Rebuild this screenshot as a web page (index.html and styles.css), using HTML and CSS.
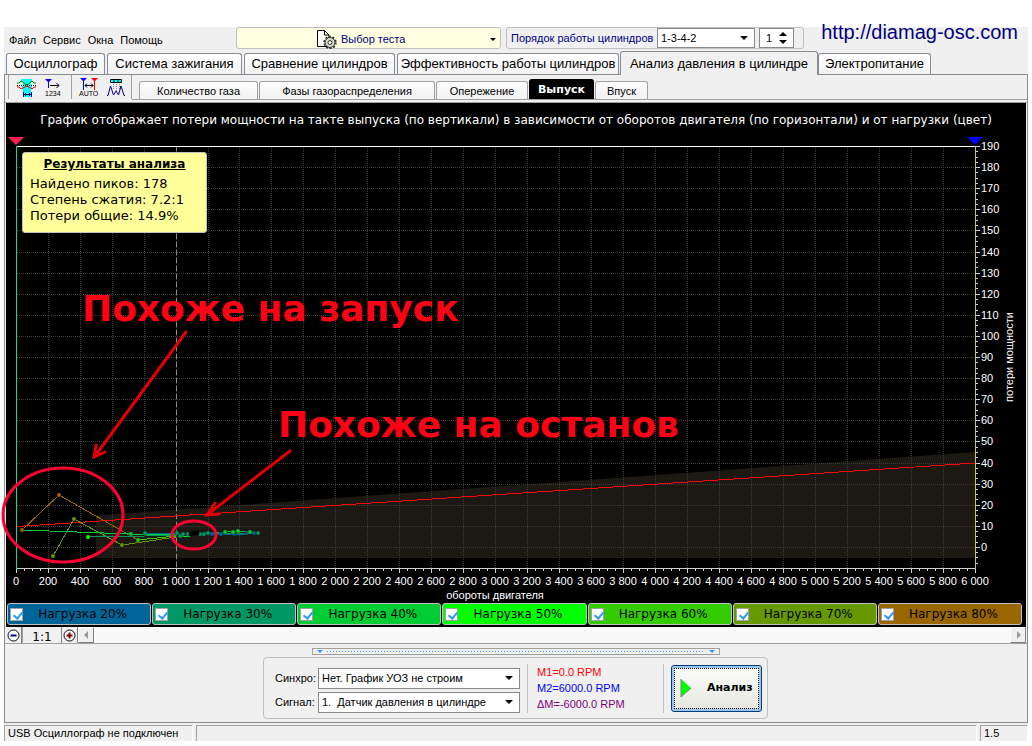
FILE: index.html
```html
<!DOCTYPE html>
<html lang="ru">
<head>
<meta charset="utf-8">
<title>USB Осциллограф</title>
<link rel="stylesheet" href="styles.css">
</head>
<body>
<div class="window">
  <a class="site-link" href="#">http://diamag-osc.com</a>

  <header class="menubar">
    <nav class="menu">
      <button type="button">Файл</button>
      <button type="button">Сервис</button>
      <button type="button">Окна</button>
      <button type="button">Помощь</button>
    </nav>
    <div class="test-picker">
      <svg class="test-icon" width="22" height="20" viewBox="0 0 22 20" aria-hidden="true">
        <path d="M1.500 1.500H8.500L13 6V17.500H1.500Z" fill="#fff" stroke="#000"/>
        <path d="M8.500 1.500V6H13" fill="none" stroke="#000"/>
        <circle cx="14" cy="13.500" r="5" fill="#d8d8cc" stroke="#333" stroke-width="1"/>
        <circle cx="14" cy="13.500" r="5.800" fill="none" stroke="#333" stroke-width="1.800" stroke-dasharray="2 1.640"/>
        <circle cx="14" cy="13.500" r="2" fill="#ffffe1" stroke="#333"/>
      </svg>
      <select aria-label="Выбор теста"><option>Выбор теста</option></select>
    </div>
    <div class="order-group">
      <label for="order">Порядок работы цилиндров</label>
      <div class="combo combo-order"><select id="order"><option>1-3-4-2</option></select></div>
      <div class="spin">
        <input type="text" inputmode="numeric" value="1" aria-label="Цилиндр">
        <svg width="9" height="14" viewBox="0 0 9 14" aria-hidden="true"><path d="M0 5L4 1L8 5ZM0 9L4 13L8 9Z"/></svg>
      </div>
    </div>
  </header>

  <nav class="tabs">
    <button type="button">Осциллограф</button>
    <button type="button">Система зажигания</button>
    <button type="button">Сравнение цилиндров</button>
    <button type="button">Эффективность работы цилиндров</button>
    <button type="button" class="active">Анализ давления в цилиндре</button>
    <button type="button">Электропитание</button>
  </nav>

  <main class="page">
    <div class="toolbar">
      <div class="tools">
        <button type="button" aria-label="Сигнал">
          <svg width="20" height="20" viewBox="0 0 20 20">
            <path d="M4 1H15V4H14V8H15V11H14V19H6V11H5V8H6V4H4Z" fill="#00ffff"/>
            <path d="M0 5H2L4 3L9 6.500H11L15 3L17 5H19" fill="none" stroke="#008000"/>
            <path d="M0 9H2L4 11L9 8.500H11L15 11L17 9H19" fill="none" stroke="#ff0000"/>
            <path d="M0 7.500H20" stroke="#000" stroke-dasharray="1 1"/>
            <path d="M6 16.500H15M6.500 14V19M14.500 14V19M8.500 15V18M12.500 15V18" stroke="#000080"/>
          </svg>
        </button>
        <button type="button" aria-label="Нумерация">
          <svg width="18" height="20" viewBox="0 0 18 20">
            <path d="M0 1H7L4 4V10H3V4Z" fill="#0000ff"/>
            <path d="M5 7.500H14M11.500 5L14 7.500L11.500 10" fill="none" stroke="#000"/>
            <text x="0" y="18" class="tool-text">1234</text>
          </svg>
        </button>
      </div>
      <div class="tools">
        <button type="button" aria-label="Авто">
          <svg width="20" height="20" viewBox="0 0 20 20">
            <path d="M1 0H8L5 3V12H4V3Z" fill="#0000ff"/>
            <path d="M12 0H19L16 3V12H15V3Z" fill="#ff0000"/>
            <path d="M6 7.500H14M8 5.500L6 7.500L8 9.500M12 5.500L14 7.500L12 9.500" fill="none" stroke="#000"/>
            <text x="0" y="18" class="tool-text">AUTO</text>
          </svg>
        </button>
        <button type="button" aria-label="Пики">
          <svg width="20" height="20" viewBox="0 0 20 20">
            <path d="M4.500 1.500H15.500V4.500H4.500Z" fill="#00ffff" stroke="#000"/>
            <path d="M8 2V4M12 2V4" stroke="#000"/>
            <path d="M7.500 6V12M10.500 6V14M13.500 6V12" stroke="#888" stroke-dasharray="1 1"/>
            <path d="M1 17.500H2L4.500 8L7.500 17L10 13L12.500 17L15 8L18 17.500H19" fill="none" stroke="#000080"/>
          </svg>
        </button>
      </div>
      <nav class="subtabs">
        <button type="button">Количество газа</button>
        <button type="button">Фазы газораспределения</button>
        <button type="button">Опережение</button>
        <button type="button" class="active">Выпуск</button>
        <button type="button">Впуск</button>
      </nav>
    </div>

    <section class="scope">
      <div class="chart">
        <h1>График отображает потери мощности на такте выпуска (по вертикали) в зависимости от оборотов двигателя (по горизонтали) и от нагрузки (цвет)</h1>
        <svg class="plot" viewBox="6 103 1020 499" role="img" aria-label="Потери мощности">
          <path d="M96 515.500L975 452V558H96Z" fill="#1c1913"/>
          <g id="grid" class="crisp"></g>
          <path class="crisp" d="M176.500 146V568" stroke="#8c8c8c" stroke-dasharray="5 3"/>
          <path class="crisp" d="M16 146.500H976" stroke="#fff"/>
          <path class="crisp" d="M16 568.500H976" stroke="#d0d0d0"/>
          <path class="crisp" d="M16.500 146V569" stroke="#00e09a"/>
          <path class="crisp" d="M975.500 146V569" stroke="#c8c850"/>
          <path class="crisp" d="M17 526.500L975 463" stroke="#ff0000"/>
          <path d="M8 137H24L16 145Z" fill="#ff2050"/>
          <path d="M967 137H983L975 145Z" fill="#0000ff"/>
          <g id="series"></g>
          <text class="axis mid" x="495" y="599">обороты двигателя</text>
          <text class="axis mid" transform="translate(1013 357) rotate(-90)">потери мощности</text>
          <g class="notes">
            <ellipse cx="63" cy="515" rx="60" ry="47"/>
            <ellipse cx="194" cy="535" rx="22" ry="14"/>
            <path d="M186 332L95 456M96 445L94 457L105 452"/>
            <path d="M290 451L208 514M215 503L207 515L219 514"/>
            <text x="82" y="321">Похоже на запуск</text>
            <text x="278" y="437">Похоже на останов</text>
          </g>
        </svg>
        <div class="results">
          <h2>Результаты анализа</h2>
          <p>Найдено пиков: 178</p>
          <p>Степень сжатия: 7.2:1</p>
          <p>Потери общие: 14.9%</p>
        </div>
      </div>
      <div class="loads">
        <label class="l20"><input type="checkbox" checked><span>Нагрузка 20%</span></label>
        <label class="l30"><input type="checkbox" checked><span>Нагрузка 30%</span></label>
        <label class="l40"><input type="checkbox" checked><span>Нагрузка 40%</span></label>
        <label class="l50"><input type="checkbox" checked><span>Нагрузка 50%</span></label>
        <label class="l60"><input type="checkbox" checked><span>Нагрузка 60%</span></label>
        <label class="l70"><input type="checkbox" checked><span>Нагрузка 70%</span></label>
        <label class="l80"><input type="checkbox" checked><span>Нагрузка 80%</span></label>
      </div>
    </section>

    <div class="scrollrow">
      <button type="button" class="zoom" aria-label="Уменьшить"><svg width="13" height="13" viewBox="0 0 13 13"><circle cx="6.500" cy="6.500" r="5.500" fill="#fff" stroke="#000"/><path d="M3.500 6.500H9.500" stroke="#000080" stroke-width="2"/></svg></button>
      <button type="button" class="ratio">1:1</button>
      <button type="button" class="zoom" aria-label="Увеличить"><svg width="13" height="13" viewBox="0 0 13 13"><circle cx="6.500" cy="6.500" r="5.500" fill="#fff" stroke="#000"/><path d="M3.500 6.500H9.500M6.500 3.500V9.500" stroke="#800000" stroke-width="2"/></svg></button>
      <button type="button" class="arrow" aria-label="Влево"><svg width="5" height="8" viewBox="0 0 5 8"><path d="M4 0V8L0 4Z" fill="#999"/></svg></button>
      <div class="track"></div>
      <button type="button" class="arrow" aria-label="Вправо"><svg width="5" height="8" viewBox="0 0 5 8"><path d="M1 0V8L5 4Z" fill="#999"/></svg></button>
    </div>

    <footer class="bottom">
      <div class="splitter">
        <svg width="6" height="3" viewBox="0 0 6 3"><path d="M0 0H6L3 3Z" fill="#3399ff"/></svg>
        <i></i>
        <svg width="6" height="3" viewBox="0 0 6 3"><path d="M0 0H6L3 3Z" fill="#3399ff"/></svg>
      </div>
      <div class="controls">
        <div class="fields">
          <label for="sync">Синхро:</label>
          <div class="combo"><select id="sync"><option>Нет. График УОЗ не строим</option></select></div>
          <label for="signal">Сигнал:</label>
          <div class="combo"><select id="signal"><option>1.&nbsp; Датчик давления в цилиндре</option></select></div>
        </div>
        <div class="markers">
          <p class="m1">M1=0.0 RPM</p>
          <p class="m2">M2=6000.0 RPM</p>
          <p class="dm">ΔM=-6000.0 RPM</p>
        </div>
        <button type="button" class="analyze">
          <svg width="12" height="20" viewBox="0 0 12 20" aria-hidden="true"><path d="M1 1L11 10L1 19Z" fill="#00ff00"/><path d="M1 1V19L11 10" fill="none" stroke="#808080"/></svg>
          <span>Анализ</span>
        </button>
      </div>
    </footer>
  </main>

  <div class="status">
    <span>USB Осциллограф не подключен</span>
    <span></span>
    <span>1.5</span>
  </div>
</div>
<script src="chart.js"></script>
</body>
</html>
```
FILE: styles.css
```css
* { box-sizing: border-box; }
body {
  margin: 0;
  background: #fff;
  font: 11px/14px "Liberation Sans", Arial, sans-serif;
  color: #000;
}
h1, h2, p { margin: 0; font-weight: normal; }
button, select, input { font: inherit; color: inherit; margin: 0; }
button { padding: 0; border: 0; background: none; }
svg { display: block; flex: none; }

.window { position: relative; margin: 27px 4px 5px; background: #f0f0f0; }
.site-link {
  position: absolute;
  right: 10px;
  top: -7px;
  font-size: 20px;
  line-height: 24px;
  color: #000080;
  text-decoration: none;
}

/* menu bar */
.menubar { display: flex; height: 22px; }
.menu { display: flex; align-items: center; gap: 7px; width: 232px; padding: 4px 0 0 5px; }
.test-picker {
  position: relative;
  width: 265px;
  background: #ffffe1;
  border: 1px solid #c0c0c0;
  border-radius: 3px;
  color: #000080;
}
.test-icon { position: absolute; left: 79px; top: 1px; }
.test-picker select {
  width: 100%;
  height: 20px;
  padding: 2px 0 0 104px;
  border: 0;
  background: none;
  appearance: none;
}
.test-picker::after, .combo::after {
  content: "";
  position: absolute;
  right: 6px;
  top: 50%;
  margin-top: -2px;
  border: 4px solid transparent;
  border-top-color: #000;
  border-bottom: 0;
  pointer-events: none;
}
.test-picker::after { right: 4px; border-width: 3px 3px 0; margin-top: 0; }
.order-group {
  display: flex;
  align-items: center;
  gap: 4px;
  width: 298px;
  margin-left: 5px;
  padding: 0 0 0 4px;
  border: 1px solid #c0c0c0;
  border-radius: 3px;
}
.order-group label { width: 142px; white-space: nowrap; color: #000080; }
.combo { position: relative; height: 21px; border: 1px solid #898989; background: #fff; }
.combo select { width: 100%; height: 19px; padding: 0 18px 0 3px; border: 0; background: none; appearance: none; }
.combo-order { width: 98px; height: 20px; }
.combo-order select { height: 18px; }
.spin { display: flex; align-items: center; width: 35px; height: 20px; border: 1px solid #898989; background: #fff; }
.spin input { width: 19px; height: 18px; padding: 0 0 0 6px; border: 0; background: none; }

/* tabs */
.tabs {
  display: grid;
  grid-template-columns: 99px 135px 151px 222px 195px 113px;
  column-gap: 2px;
  align-items: end;
  height: 25px;
  padding: 2px 0 0 2px;
  font-size: 13px;
}
.tabs button {
  height: 21px;
  border: 1px solid #898c95;
  border-bottom: 0;
  border-radius: 3px 3px 0 0;
  background: linear-gradient(#fff, #f2f2f2);
  white-space: nowrap;
}
.tabs .active { height: 24px; margin: 0 -2px -1px -1px; background: #f0f0f0; z-index: 1; }

.page { border: 1px solid #898c95; }

/* toolbar */
.toolbar { display: flex; height: 28px; padding-left: 3px; border-bottom: 1px solid #a0a0a0; }
.tools {
  display: flex;
  gap: 8px;
  width: 63px;
  height: 24px;
  padding: 2px 0 0 8px;
  border-left: 1px solid #a0a0a0;
}
.tools svg { overflow: visible; }
.tool-text { font: 7px "Liberation Sans", Arial, sans-serif; }
.tools + .tools { width: 61px; padding-left: 7px; gap: 7px; border-right: 1px solid #a0a0a0; }
.subtabs {
  flex: 1;
  display: grid;
  grid-template-columns: 119px 176px 92px 65px 53px;
  align-items: end;
  column-gap: 1px;
  height: 25px;
  padding: 4px 0 0 7px;
  border-bottom: 1px solid #a0a0a0;
}
.subtabs button {
  height: 18px;
  border: 1px solid #a0a0a0;
  border-bottom: 0;
  border-radius: 3px 3px 0 0;
  background: linear-gradient(#fcfcfc, #f2f2f2);
  white-space: nowrap;
}
.subtabs .active { height: 20px; background: #000; border-color: #000; color: #fff; font: bold 11px "DejaVu Sans", sans-serif; }

/* chart */
.scope { margin: 0 1px; padding: 0 0 2px; background: #000; }
.chart { position: relative; }
.chart h1 {
  position: absolute;
  left: 0;
  right: 0;
  top: 8px;
  text-align: center;
  white-space: nowrap;
  font: 12px/18px "DejaVu Sans", Verdana, sans-serif;
  color: #fff;
}
.plot { width: 100%; overflow: visible; position: relative; }
.crisp { shape-rendering: crispEdges; }
.gridline { stroke: #3c3c3c; stroke-dasharray: 1 1; }
.tick { stroke: #d0d0d0; }
.axis { fill: #fff; font: 11px "Liberation Sans", Arial, sans-serif; }
.mid { text-anchor: middle; }
.notes ellipse { fill: none; stroke: #ff0030; stroke-width: 3; }
.notes path { fill: none; stroke: #e00000; stroke-width: 3; stroke-linecap: round; }
.notes text { fill: #ff0014; font: bold 36px "DejaVu Sans", Verdana, sans-serif; }
.results {
  position: absolute;
  left: 16px;
  top: 49px;
  width: 185px;
  height: 81px;
  padding: 3px 7px;
  border: 1px solid #c0c0c0;
  border-radius: 3px;
  background: #ffff99;
  font: 13px/16px "DejaVu Sans", Verdana, sans-serif;
}
.results h2 { margin-bottom: 4px; text-align: center; font: bold 12px/16px "DejaVu Sans", Verdana, sans-serif; text-decoration: underline; }

.loads { display: grid; grid-template-columns: repeat(7, 1fr); gap: 1px; padding: 1px 4px 0 1px; }
.loads label {
  display: flex;
  align-items: center;
  height: 22px;
  padding-left: 2px;
  border: 1px solid #c0c0c0;
  border-radius: 3px;
  font: 12px/16px "DejaVu Sans", Verdana, sans-serif;
}
.loads span { flex: 1; padding-right: 8px; text-align: center; white-space: nowrap; }
.loads input {
  appearance: none;
  width: 13px;
  height: 13px;
  border: 1px solid #a0a0a0;
  background: #fff;
}
.loads input:checked::after {
  content: "";
  display: block;
  width: 4px;
  height: 7px;
  margin: 1px 0 0 4px;
  border: solid #3399ff;
  border-width: 0 2px 2px 0;
  transform: rotate(40deg);
}
.l20 { background: #006699; }
.l30 { background: #009966; }
.l40 { background: #00cc33; }
.l50 { background: #00ff00; }
.l60 { background: #33cc00; }
.l70 { background: #669900; }
.l80 { background: #996600; }

/* scroll row */
.scrollrow { display: flex; height: 17px; padding: 0 1px 0 1px; border-bottom: 1px solid #a0a0a0; }
.scrollrow button { display: flex; align-items: center; justify-content: center; border-right: 1px solid #808080; }
.zoom { width: 16px; }
.scrollrow .ratio { width: 40px; padding-top: 3px; border-left: 1px solid #a0a0a0; font: 12px/14px "DejaVu Sans", Verdana, sans-serif; }
.scrollrow .arrow { width: 16px; border: 1px solid #fff; border-right-color: #808080; border-bottom-color: #808080; background: #f0f0f0; }
.track { flex: 1; background: #f8f8f8; }

/* bottom panel */
.bottom { display: flex; flex-direction: column; align-items: center; gap: 2px; padding: 4px 1px 3px 0; }
.splitter { display: flex; align-items: center; gap: 4px; width: 408px; height: 7px; padding: 0 4px; border: 1px solid #a0a0a0; }
.splitter i { flex: 1; height: 1px; background: repeating-linear-gradient(90deg, #3399ff 0 1px, transparent 1px 3px); }
.controls {
  display: flex;
  align-items: center;
  width: 505px;
  height: 62px;
  padding: 0 5px 0 11px;
  border: 1px solid #c0c0c0;
  border-radius: 4px;
}
.fields { display: grid; grid-template-columns: 43px 202px; gap: 3px 0; align-items: center; padding-top: 4px; }
.markers {
  width: 137px;
  height: 49px;
  margin: 0 7px;
  padding-left: 9px;
  border: solid #c0c0c0;
  border-width: 0 1px;
  line-height: 16px;
}
.m1 { color: #ff0000; }
.m2 { color: #0000ff; }
.dm { color: #800080; }
.analyze {
  display: flex;
  align-items: center;
  gap: 15px;
  width: 91px;
  height: 47px;
  padding-left: 8px;
  border: 1px solid #003c74;
  border-radius: 3px;
  background: linear-gradient(#fdfdfb, #e6e6de);
  box-shadow: inset 0 0 0 2px #9cc4f0;
  outline: 1px dotted #000;
  outline-offset: -4px;
  font: bold 11px/14px "DejaVu Sans", Verdana, sans-serif;
}

/* status bar */
.status { display: grid; grid-template-columns: 189px 1fr 48px; gap: 3px; padding-top: 2px; }
.status span { height: 16px; padding: 0 0 0 3px; border: 1px solid #a0a0a0; border-right-color: #fff; border-bottom: 0; white-space: nowrap; }
```
FILE: chart.js
```js
const NS = "http://www.w3.org/2000/svg";
const grid = document.getElementById("grid");
const series = document.getElementById("series");
const px = v => 16.2 + v * 959 / 6000;
const py = v => 547.4 - v * 2.11;

function add(parent, tag, attrs, text) {
  const el = document.createElementNS(NS, tag);
  for (const key in attrs) el.setAttribute(key, attrs[key]);
  if (text) el.textContent = text;
  parent.appendChild(el);
}
const snap = v => Math.floor(v) + 0.5;

for (let v = 0; v <= 6000; v += 50) {
  const x = snap(px(v));
  const major = v % 200 === 0;
  if (major && v > 0 && v < 6000) add(grid, "path", { class: "gridline", d: `M${x} 147V568` });
  add(grid, "path", { class: "tick", d: `M${x} 569v${major ? 4 : 2}` });
  if (major) {
    const label = v < 1000 ? String(v) : `${Math.floor(v / 1000)} ${String(v % 1000).padStart(3, "0")}`;
    add(grid, "text", { class: "axis mid", x: x - 0.5, y: 585 }, label);
  }
}
for (let v = -7.5; v <= 190; v += 2.5) {
  const y = snap(py(v));
  const major = v % 10 === 0;
  if (major && v < 190) add(grid, "path", { class: "gridline", d: `M17 ${y}H975` });
  add(grid, "path", { class: "tick", d: `M976 ${y}h${major ? 4 : 2}` });
  if (major) add(grid, "text", { class: "axis", x: 981, y: y + 3 }, String(v));
}

const lines = [
  ["#996600", "22,530 59,495 138,540"],
  ["#669900", "53,556 74,519 122,545 176,537"],
  ["#33cc00", "138,540 176,536"],
  ["#00cc33", "22,530 131,534 178,535 225,532 238,531 250,532"],
  ["#00ff00", "180,536 190,537"],
  ["#009966", "88,537 145,536 178,535 208,534 258,533"],
  ["#006699", "145,533 178,534 212,534 247,534 258,533"]
];
const dots = [
  ["#996600", "22,530 59,495"],
  ["#669900", "53,556 74,519 122,545"],
  ["#33cc00", "138,540"],
  ["#00ff00", "88,537"],
  ["#009966", "145,533 177,533 180,536 183,534 188,534 200,534 204,534 208,533 258,533"],
  ["#006699", "212,534 221,534 234,534 247,533 254,533"],
  ["#00cc33", "131,534 225,532 233,532 238,531 250,532"],
  ["#000000", "191,534 194,533 197,533"]
];
for (const [stroke, points] of lines) {
  add(series, "polyline", { points, stroke, fill: "none", class: "crisp" });
}
for (const [fill, points] of dots) {
  for (const p of points.split(" ")) {
    const [cx, cy] = p.split(",");
    add(series, "circle", { cx, cy, r: 2.2, fill, stroke: "#000", "stroke-width": 0.4 });
  }
}
```
